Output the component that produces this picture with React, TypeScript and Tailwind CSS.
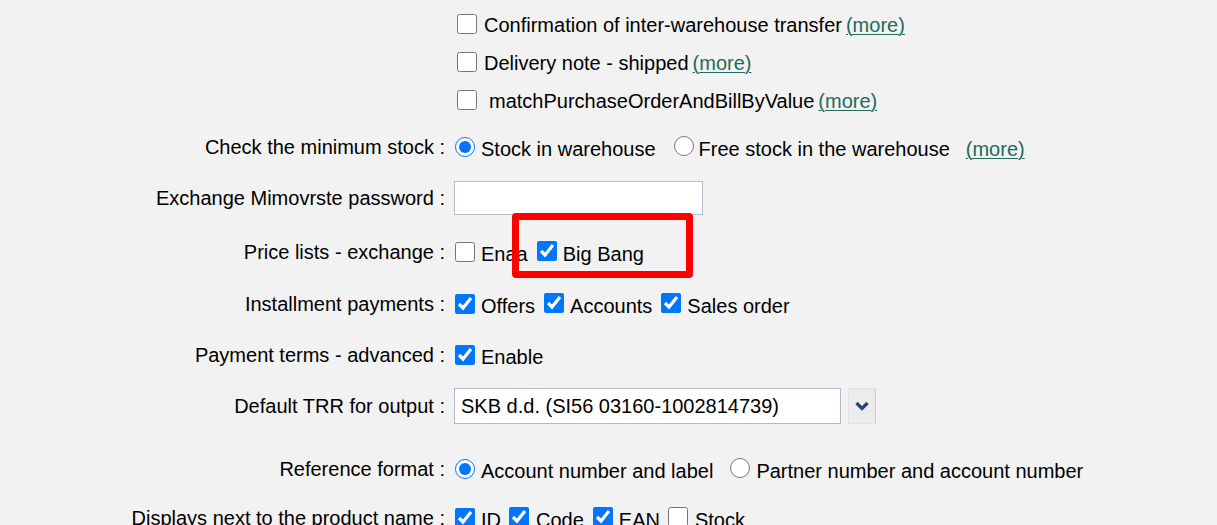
import React from 'react';

const font = { fontFamily: '"Liberation Sans", Arial, sans-serif' };

function Check({ checked = false }: { checked?: boolean }) {
  return (
    <input
      type="checkbox"
      defaultChecked={checked}
      className="m-0 h-[20px] w-[20px] shrink-0 accent-[#0075ff]"
    />
  );
}

function Radio({ checked = false, name }: { checked?: boolean; name: string }) {
  return (
    <input
      type="radio"
      name={name}
      defaultChecked={checked}
      className="m-0 h-[20px] w-[20px] shrink-0 accent-[#0075ff]"
    />
  );
}

function More() {
  return <a className="text-[#1f6b5c] underline decoration-1 underline-offset-2 cursor-pointer">(more)</a>;
}

function Row({ label, h, children }: { label?: string; h: string; children: React.ReactNode }) {
  return (
    <div className={`flex items-center ${h}`}>
      <div className="w-[445px] shrink-0 text-right whitespace-nowrap">{label}</div>
      <div className="flex items-center pl-[10px] whitespace-nowrap">{children}</div>
    </div>
  );
}

export default function App() {
  return (
    <div className="relative h-[525px] w-[1217px] overflow-hidden bg-[#f2f2f2] text-[20px] leading-none text-black" style={font}>
      <div className="pt-[5px]">
        <Row h="h-[38px]">
          <span className="ml-[2px] flex items-center">
            <Check />
            <span className="ml-[7px] translate-y-[1px]">Confirmation of inter-warehouse transfer</span>
            <span className="ml-[4px] translate-y-[1px]"><More /></span>
          </span>
        </Row>
        <Row h="h-[38px]">
          <span className="ml-[2px] flex items-center">
            <Check />
            <span className="ml-[7px] translate-y-[1px]">Delivery note - shipped</span>
            <span className="ml-[4px] translate-y-[1px]"><More /></span>
          </span>
        </Row>
        <Row h="h-[38px]">
          <span className="ml-[2px] flex items-center">
            <Check />
            <span className="ml-[12px] translate-y-[1px]">matchPurchaseOrderAndBillByValue</span>
            <span className="ml-[4px] translate-y-[1px]"><More /></span>
          </span>
        </Row>
        <Row label="Check the minimum stock :" h="h-[56px]">
          <Radio name="stock" checked />
          <span className="ml-[6px] translate-y-[2px]">Stock in warehouse</span>
          <span className="ml-[18px]"><Radio name="stock" /></span>
          <span className="ml-[5px] translate-y-[2px]">Free stock in the warehouse</span>
          <span className="ml-[16px] translate-y-[2px]"><More /></span>
        </Row>
        <Row label="Exchange Mimovrste password :" h="h-[46px]">
          <input type="password" className="ml-[-1px] h-[34px] w-[249px] border border-[#b9bccc] bg-white outline-none" />
        </Row>
        <Row label="Price lists - exchange :" h="h-[62px]">
          <Check />
          <span className="ml-[6px] translate-y-[2px]">Enaa</span>
          <span className="ml-[9px]"><Check checked /></span>
          <span className="ml-[6px] translate-y-[2px]">Big Bang</span>
        </Row>
        <Row label="Installment payments :" h="h-[42px]">
          <Check checked />
          <span className="ml-[6px] translate-y-[2px]">Offers</span>
          <span className="ml-[9px]"><Check checked /></span>
          <span className="ml-[6px] translate-y-[2px]">Accounts</span>
          <span className="ml-[9px]"><Check checked /></span>
          <span className="ml-[6px] translate-y-[2px]">Sales order</span>
        </Row>
        <Row label="Payment terms - advanced :" h="h-[60px]">
          <Check checked />
          <span className="ml-[6px] translate-y-[2px]">Enable</span>
        </Row>
        <Row label="Default TRR for output :" h="h-[42px]">
          <div className="ml-[-1px] flex h-[36px] w-[387px] items-center border border-[#b3b7cb] bg-white pl-[6px]">
            SKB d.d. (SI56 03160-1002814739)
          </div>
          <div className="ml-[7px] flex h-[36px] w-[28px] items-center justify-center border border-[#e2e2e2] border-r-[#b8dcbf] bg-[#ececec]">
            <svg width="16" height="12" viewBox="0 0 16 12">
              <path d="M2.5 3 L8 8.5 L13.5 3" fill="none" stroke="#2b3f7a" strokeWidth="3.2" />
            </svg>
          </div>
        </Row>
        <Row label="Reference format :" h="h-[84px]">
          <Radio name="ref" checked />
          <span className="ml-[6px] translate-y-[2px]">Account number and label</span>
          <span className="ml-[17px]"><Radio name="ref" /></span>
          <span className="ml-[6px] translate-y-[2px]">Partner number and account number</span>
        </Row>
        <Row label="Displays next to the product name :" h="h-[14px]">
          <Check checked />
          <span className="ml-[6px] translate-y-[2px]">ID</span>
          <span className="ml-[8px]"><Check checked /></span>
          <span className="ml-[7px] translate-y-[2px]">Code</span>
          <span className="ml-[9px]"><Check checked /></span>
          <span className="ml-[6px] translate-y-[2px]">EAN</span>
          <span className="ml-[8px]"><Check /></span>
          <span className="ml-[7px] translate-y-[2px]">Stock</span>
        </Row>
      </div>
      <div className="absolute left-[512px] top-[213px] h-[65px] w-[181px] rounded-[4px] border-[7px] border-[#ff0000]" />
    </div>
  );
}
